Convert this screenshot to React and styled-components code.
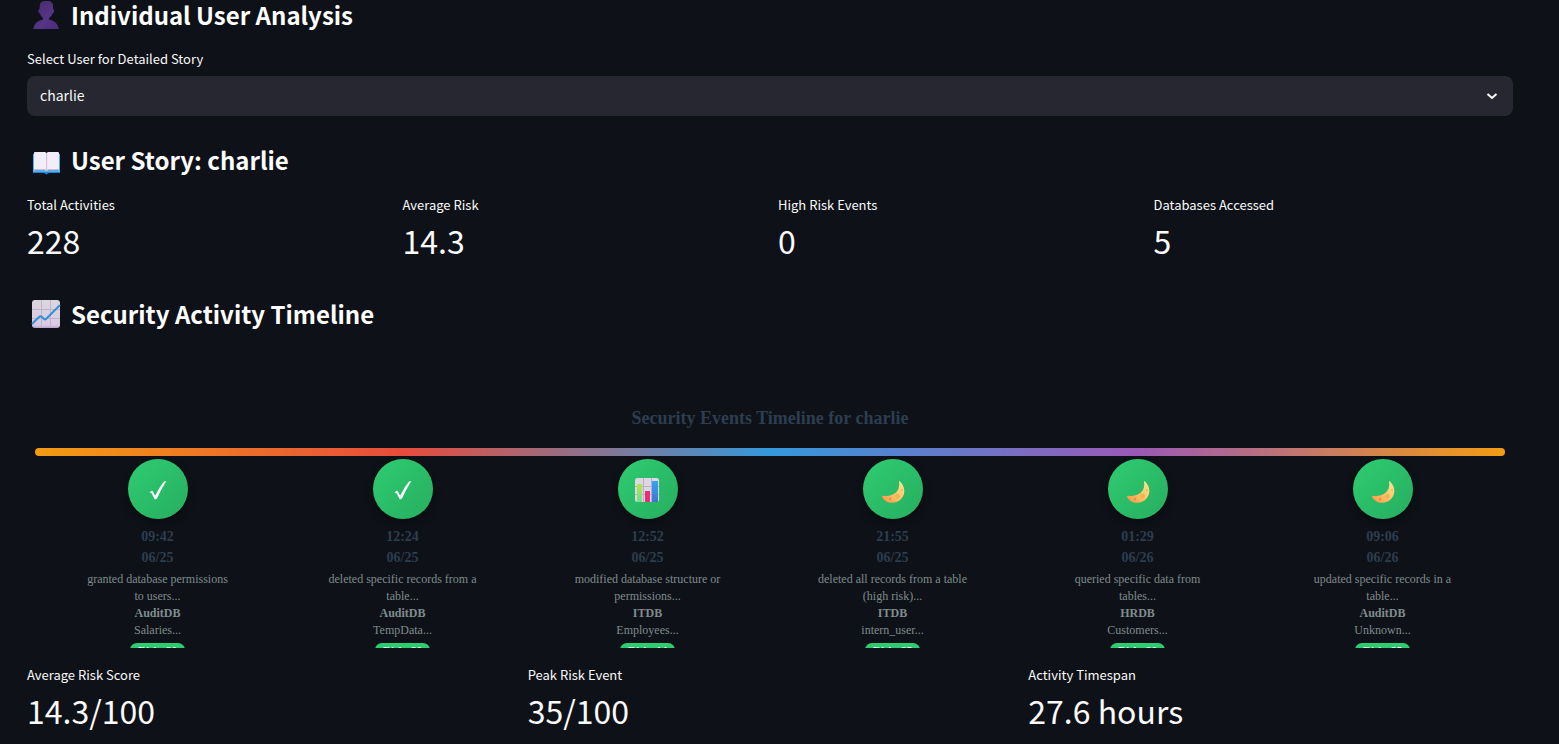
import React, { useState } from "react";
import styled, { createGlobalStyle } from "styled-components";

const GlobalStyle = createGlobalStyle`
  *, *::before, *::after { box-sizing: border-box; }
  body {
    margin: 0;
    background: #0e1117;
    color: #fafafa;
    font-family: "Source Sans Pro", "Noto Sans CJK JP", "Noto Sans", sans-serif;
  }
`;

const Page = styled.main`
  padding: 0 46px 0 27px;
`;

const Heading = styled.h3`
  display: flex;
  align-items: flex-start;
  gap: 8px;
  height: 32px;
  margin: 0;
  padding-left: 4px;
  font-size: 24px;
  font-weight: 600;
  line-height: 30px;
  color: #fff;
`;

const HeadingIcon = styled.svg`
  flex: none;
  width: 32px;
  height: 32px;
`;

const Field = styled.div`
  display: flex;
  flex-direction: column;
  gap: 7px;
  margin: 17px 0 29px;
`;

const Label = styled.label`
  font-size: 13px;
  line-height: 20px;
`;

const SelectBox = styled.div`
  display: grid;
  align-items: center;
  background: #262730;
  border-radius: 8px;
`;

const Select = styled.select`
  grid-area: 1 / 1;
  width: 100%;
  height: 40px;
  padding: 0 40px 2px 13px;
  border: 0;
  border-radius: 8px;
  appearance: none;
  background: transparent;
  color: inherit;
  font-family: inherit;
  font-size: 14px;
`;

const Chevron = styled.svg`
  grid-area: 1 / 1;
  justify-self: end;
  width: 12px;
  height: 12px;
  margin-right: 15px;
  pointer-events: none;
`;

const Metrics = styled.dl`
  display: grid;
  grid-template-columns: repeat(${(p) => p.$columns}, 1fr);
  gap: 16px;
  margin: ${(p) => p.$spacing};
`;

const MetricLabel = styled.dt`
  font-size: 13px;
  line-height: 20px;
`;

const MetricValue = styled.dd`
  margin: 3px 0 0;
  font-size: 32px;
  line-height: 44px;
`;

const TimelineFrame = styled.section`
  height: 300px;
  margin-top: 17px;
  padding: 60px 8px 0;
  overflow: hidden;
  font-family: "Liberation Serif", "Times New Roman", serif;
  text-align: center;
`;

const TimelineTitle = styled.h4`
  margin: 0 0 20px;
  font-size: 18px;
  line-height: 20px;
  color: #2c3e50;
`;

const Track = styled.div`
  height: 8px;
  border-radius: 4px;
  background: linear-gradient(90deg, #f39c12, #e74c3c, #3498db, #9b59b6, #f39c12);
`;

const Events = styled.ol`
  display: flex;
  margin: 3px 0 0;
  padding: 0;
  list-style: none;
`;

const Event = styled.li`
  display: flex;
  flex: 1;
  flex-direction: column;
  align-items: center;
`;

const Dot = styled.div`
  display: grid;
  place-items: center;
  width: 60px;
  height: 60px;
  border-radius: 50%;
  background: linear-gradient(135deg, #2ecc71, #27ae60);
  box-shadow: 0 4px 8px rgba(0, 0, 0, 0.3);
`;

const DotIcon = styled.svg`
  width: 28px;
  height: 28px;
`;

const When = styled.time`
  margin-top: 7px;
  font-size: 14px;
  font-weight: 700;
  line-height: 21px;
  color: #2c3e50;
`;

const Details = styled.p`
  max-width: 150px;
  margin: 3px 0 4px;
  font-size: 12px;
  line-height: 17px;
  color: #7f8c8d;
`;

const RiskBadge = styled.span`
  padding: 1px 8px;
  border-radius: 10px;
  background: #2ecc71;
  color: #fff;
  font-size: 11px;
  font-weight: 700;
  line-height: 12px;
`;

function PersonIcon() {
  return (
    <HeadingIcon viewBox="0 0 32 32" aria-hidden="true">
      <defs>
        <linearGradient id="person" x1="0" y1="0" x2="1" y2="1">
          <stop offset="0" stopColor="#432c68" />
          <stop offset="0.6" stopColor="#573487" />
          <stop offset="1" stopColor="#4b2b76" />
        </linearGradient>
      </defs>
      <path
        fill="url(#person)"
        d="M9 4Q10 1 14 1h3q4 0 5 4v4q1.500 0 1 2.500-.3 2-1.500 2-.8 3-3.500 4.500v1.500q8.500 1.500 10 9.500H2q1.500-8 10-9.500V18q-2.500-1.500-3-4.500-1.500 0-1.800-2Q7 9 8.500 9z"
      />
    </HeadingIcon>
  );
}

function BookIcon() {
  return (
    <HeadingIcon viewBox="0 0 32 32" aria-hidden="true">
      <path fill="#1686d9" d="M2 10h27v18H18l-2.500 1.500L13 28H2z" />
      <path fill="#42b7f5" d="M2 9h2v17H2zM27 9h2v17h-2zM2 26h27v1H2z" />
      <path fill="#f2edf8" d="M3 8q0-1 1-1h10l1.500 1L17 7h10q1 0 1 1v17H17l-1.500 1-1.500-1H3z" />
      <path fill="#c9bcd9" d="M3 24h11l1.500 1 1.500-1h11v1.500H17l-1.500 1-1.500-1H3z" />
      <path fill="#d0c5df" d="M15 8h1.200v17H15z" />
    </HeadingIcon>
  );
}

function ChartIcon() {
  return (
    <HeadingIcon viewBox="0 0 32 32" aria-hidden="true">
      <defs>
        <linearGradient id="sheet" x1="0" y1="0" x2="0" y2="1">
          <stop offset="0" stopColor="#dad6df" />
          <stop offset="0.9" stopColor="#d9cae5" />
          <stop offset="1" stopColor="#b79fca" />
        </linearGradient>
      </defs>
      <rect x="1" y="1" width="28" height="28" rx="3" fill="url(#sheet)" />
      <path stroke="#bcb5c5" d="M10.500 1v28M19.500 1v28M1 10.500h28M1 19.500h28" />
      <path fill="none" stroke="#348fd8" strokeWidth="2" d="M1 25l7-7q1.500-1.500 3 0l2 2q1 1 2 0L29 6" />
    </HeadingIcon>
  );
}

function CheckIcon() {
  return (
    <DotIcon viewBox="0 0 28 28" aria-hidden="true">
      <path fill="#fff" d="M5.500 17.500l2-1.800q1.200 0 1.700 1.200l2 3.800Q15 12.500 20 6.500l2.300-.5Q17 14.500 13 23.500l-2.200 1Q8.500 19.500 7.300 18z" />
    </DotIcon>
  );
}

function BarsIcon() {
  return (
    <DotIcon viewBox="0 0 28 28" aria-hidden="true">
      <defs>
        <linearGradient id="barGreen" x1="0" y1="0" x2="0" y2="1">
          <stop offset="0" stopColor="#b5e14b" />
          <stop offset="1" stopColor="#6fe08f" />
        </linearGradient>
        <linearGradient id="barBlue" x1="0" y1="0" x2="0" y2="1">
          <stop offset="0" stopColor="#34a4f4" />
          <stop offset="1" stopColor="#3b76cd" />
        </linearGradient>
      </defs>
      <rect x="1" y="3" width="24" height="24" rx="2.500" fill="#ddd6e3" />
      <path stroke="#b9b1c3" d="M9.500 3v24M17.500 3v24M1 11.500h24M1 19.500h24" />
      <path fill="url(#barGreen)" d="M3 9h5v18H3z" />
      <path fill="#e62f75" d="M11 16h5v11h-5z" />
      <path fill="url(#barBlue)" d="M18 6h6v21h-6z" />
    </DotIcon>
  );
}

function MoonIcon() {
  return (
    <DotIcon viewBox="0 0 28 28" aria-hidden="true">
      <defs>
        <linearGradient id="moon" x1="1" y1="0" x2="0" y2="1">
          <stop offset="0" stopColor="#ffe79a" />
          <stop offset="0.5" stopColor="#fcc668" />
          <stop offset="1" stopColor="#f79245" />
        </linearGradient>
      </defs>
      <path fill="url(#moon)" d="M20.500 6C26 11 27 18 22.500 23.500 17 30 6 29 3 21.500q0-1 1-.8C15 22 21.500 16 20 7q0-1 .5-1z" />
      <circle cx="18.500" cy="21" r="1.800" fill="#fbb659" stroke="#eba34e" strokeWidth=".6" />
      <circle cx="23" cy="15" r="1" fill="#eeb45f" />
      <circle cx="11" cy="24" r="1.200" fill="#eb9147" />
    </DotIcon>
  );
}

const summary = [
  ["Total Activities", "228"],
  ["Average Risk", "14.3"],
  ["High Risk Events", "0"],
  ["Databases Accessed", "5"],
];

const riskSummary = [
  ["Average Risk Score", "14.3/100"],
  ["Peak Risk Event", "35/100"],
  ["Activity Timespan", "27.6 hours"],
];

const events = [
  { icon: CheckIcon, time: "09:42", date: "06/25", action: "granted database permissions to users...", db: "AuditDB", table: "Salaries...", risk: 20 },
  { icon: CheckIcon, time: "12:24", date: "06/25", action: "deleted specific records from a table...", db: "AuditDB", table: "TempData...", risk: 20 },
  { icon: BarsIcon, time: "12:52", date: "06/25", action: "modified database structure or permissions...", db: "ITDB", table: "Employees...", risk: 14 },
  { icon: MoonIcon, time: "21:55", date: "06/25", action: "deleted all records from a table (high risk)...", db: "ITDB", table: "intern_user...", risk: 25 },
  { icon: MoonIcon, time: "01:29", date: "06/26", action: "queried specific data from tables...", db: "HRDB", table: "Customers...", risk: 20 },
  { icon: MoonIcon, time: "09:06", date: "06/26", action: "updated specific records in a table...", db: "AuditDB", table: "Unknown...", risk: 25 },
];

function MetricRow({ items, spacing }) {
  return (
    <Metrics $columns={items.length} $spacing={spacing}>
      {items.map(([label, value]) => (
        <div key={label}>
          <MetricLabel>{label}</MetricLabel>
          <MetricValue>{value}</MetricValue>
        </div>
      ))}
    </Metrics>
  );
}

export default function App() {
  const [user, setUser] = useState("charlie");
  return (
    <>
      <GlobalStyle />
      <Page>
        <Heading>
          <PersonIcon />
          Individual User Analysis
        </Heading>
        <Field>
          <Label htmlFor="user">Select User for Detailed Story</Label>
          <SelectBox>
            <Select id="user" value={user} onChange={(e) => setUser(e.target.value)}>
              <option value="charlie">charlie</option>
            </Select>
            <Chevron viewBox="0 0 12 12" aria-hidden="true">
              <path fill="none" stroke="#fafafa" strokeWidth="2" d="M1.500 4L6 8l4.500-4" />
            </Chevron>
          </SelectBox>
        </Field>
        <Heading>
          <BookIcon />
          User Story: {user}
        </Heading>
        <MetricRow items={summary} spacing="18px 0 37px" />
        <Heading>
          <ChartIcon />
          Security Activity Timeline
        </Heading>
        <TimelineFrame>
          <TimelineTitle>Security Events Timeline for {user}</TimelineTitle>
          <Track />
          <Events>
            {events.map(({ icon: Icon, ...event }) => (
              <Event key={event.date + event.time}>
                <Dot>
                  <Icon />
                </Dot>
                <When>
                  {event.time}
                  <br />
                  {event.date}
                </When>
                <Details>
                  {event.action}
                  <br />
                  <strong>{event.db}</strong>
                  <br />
                  {event.table}
                </Details>
                <RiskBadge>Risk: {event.risk}</RiskBadge>
              </Event>
            ))}
          </Events>
        </TimelineFrame>
        <MetricRow items={riskSummary} spacing="17px 0 0" />
      </Page>
    </>
  );
}
